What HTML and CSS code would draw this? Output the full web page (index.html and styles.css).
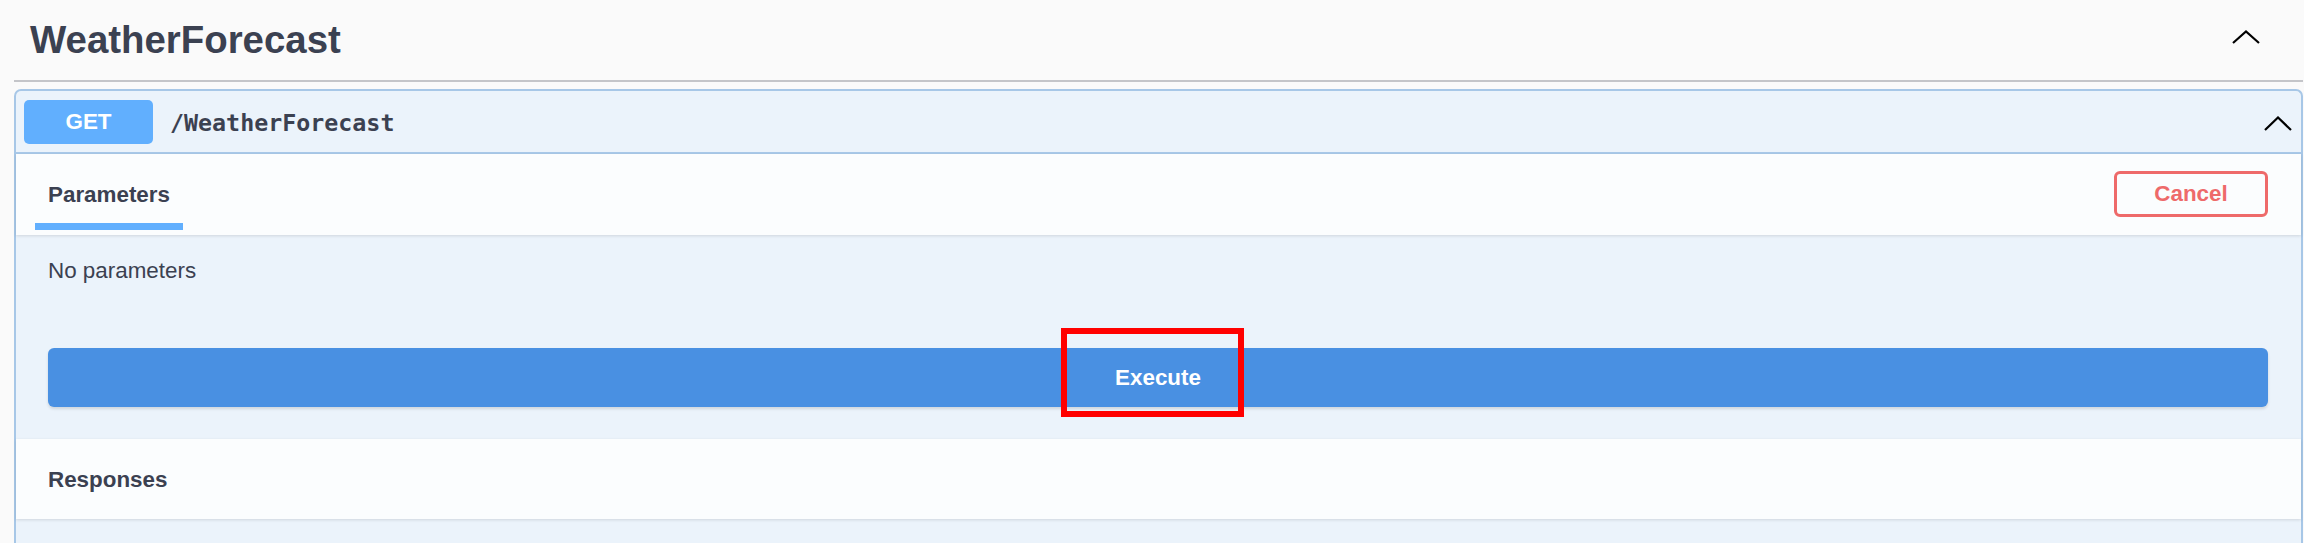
FILE: index.html
```html
<!DOCTYPE html>
<html lang="en">
<head>
  <meta charset="UTF-8">
  <meta name="viewport" content="width=device-width, initial-scale=1.0">
  <title>WeatherForecast - Swagger UI</title>
  <link rel="stylesheet" href="styles.css">
</head>
<body>

<div class="tag-section">
  <!-- Tag basligi -->
  <h3 class="tag-title">
    <span>WeatherForecast</span>
    <svg class="chevron chevron-tag" viewBox="0 0 28 14" width="28" height="14">
      <polyline points="1,13 14,1.5 27,13" />
    </svg>
  </h3>

  <!-- GET islemi -->
  <div class="opblock">
    <div class="summary">
      <span class="method">GET</span>
      <span class="path">/WeatherForecast</span>
      <svg class="chevron chevron-op" viewBox="0 0 28 15" width="28" height="15">
        <polyline points="1,14 14,1.5 27,14" />
      </svg>
    </div>

    <div class="section-header">
      <div class="tab">Parameters</div>
      <button class="cancel-btn">Cancel</button>
    </div>

    <div class="op-body">
      <div class="no-params">No parameters</div>
      <div class="execute-wrapper">
        <button class="execute-btn">Execute</button>
        <div class="highlight"></div>
      </div>
    </div>

    <div class="responses-header">Responses</div>
    <div class="op-rest"></div>
  </div>
</div>

</body>
</html>
```

FILE: styles.css
```css
/* Temel ayarlar */
body {
  margin: 0;
  background: #fafafa;
  font-family: 'Liberation Sans', Arial, sans-serif;
  color: #3b4151;
  height: 543px;
  overflow: hidden;
}

.tag-section {
  padding: 0 1px 0 14px;
}

/* Tag basligi */
.tag-title {
  margin: 0;
  height: 82px;
  box-sizing: border-box;
  padding: 17px 0 0 16px;
  display: flex;
  align-items: flex-start;
  justify-content: space-between;
  font-size: 38.4px;
  line-height: 46px;
  font-weight: bold;
  border-bottom: 2px solid #c4c5c9;
}

.chevron {
  fill: none;
  stroke: #000;
  stroke-width: 2.2;
}

.chevron-tag {
  margin: 13px 43px 0 0;
}

/* Islem blogu */
.opblock {
  margin-top: 7px;
  border: 2px solid #a7c7e7;
  border-bottom: none;
  border-radius: 7px 7px 0 0;
  background: #ebf3fb;
}

.summary {
  display: flex;
  align-items: center;
  padding: 9px 9px 8px 8px;
  border-bottom: 2px solid #a9c9e9;
}

.method {
  width: 129px;
  height: 44px;
  line-height: 44px;
  text-align: center;
  background: #61affe;
  color: #fff;
  font-weight: bold;
  font-size: 22.4px;
  border-radius: 5px;
  margin-right: 17px;
}

.path {
  flex: 1;
  font-family: 'DejaVu Sans Mono', 'Liberation Mono', monospace;
  font-size: 23.3px;
  font-weight: bold;
  color: #3b4151;
}

.chevron-op {
  margin-top: 2px;
}

/* Parametre basligi */
.section-header {
  display: flex;
  align-items: flex-start;
  justify-content: space-between;
  height: 81px;
  box-sizing: border-box;
  padding: 0 33px 0 19px;
  background: #fbfdfe;
  box-shadow: 0 1px 3px rgba(0, 0, 0, 0.12);
  position: relative;
}

.tab {
  margin-top: 27px;
  padding: 0 13px 15px;
  font-size: 22.4px;
  line-height: 27px;
  font-weight: bold;
  border-bottom: 7px solid #61affe;
}

.cancel-btn {
  margin-top: 17px;
  width: 154px;
  height: 46px;
  background: transparent;
  border: 3px solid #ee6a6a;
  border-radius: 6px;
  color: #ee6a6a;
  font-family: inherit;
  font-size: 22.4px;
  font-weight: bold;
  cursor: pointer;
}

/* Govde */
.op-body {
  padding: 22px 33px 32px 32px;
}

.no-params {
  font-size: 22.4px;
  line-height: 27px;
}

.execute-wrapper {
  position: relative;
  margin-top: 64px;
}

.execute-btn {
  display: block;
  width: 100%;
  height: 59px;
  border: none;
  border-radius: 6px;
  background: #4990e2;
  color: #fff;
  font-family: inherit;
  font-size: 22.4px;
  font-weight: bold;
  box-shadow: 0 2px 3px rgba(0, 0, 0, 0.12);
  cursor: pointer;
}

/* Kirmizi vurgu cercevesi */
.highlight {
  position: absolute;
  left: 1013px;
  top: -20px;
  width: 183px;
  height: 89px;
  box-sizing: border-box;
  border: 6px solid #ff0000;
  pointer-events: none;
}

/* Yanitlar */
.responses-header {
  height: 80px;
  box-sizing: border-box;
  padding: 27px 32px 0;
  font-size: 22.4px;
  line-height: 27px;
  font-weight: bold;
  background: #fbfdfe;
  box-shadow: 0 1px 3px rgba(0, 0, 0, 0.12);
}

.op-rest {
  height: 60px;
}
```
